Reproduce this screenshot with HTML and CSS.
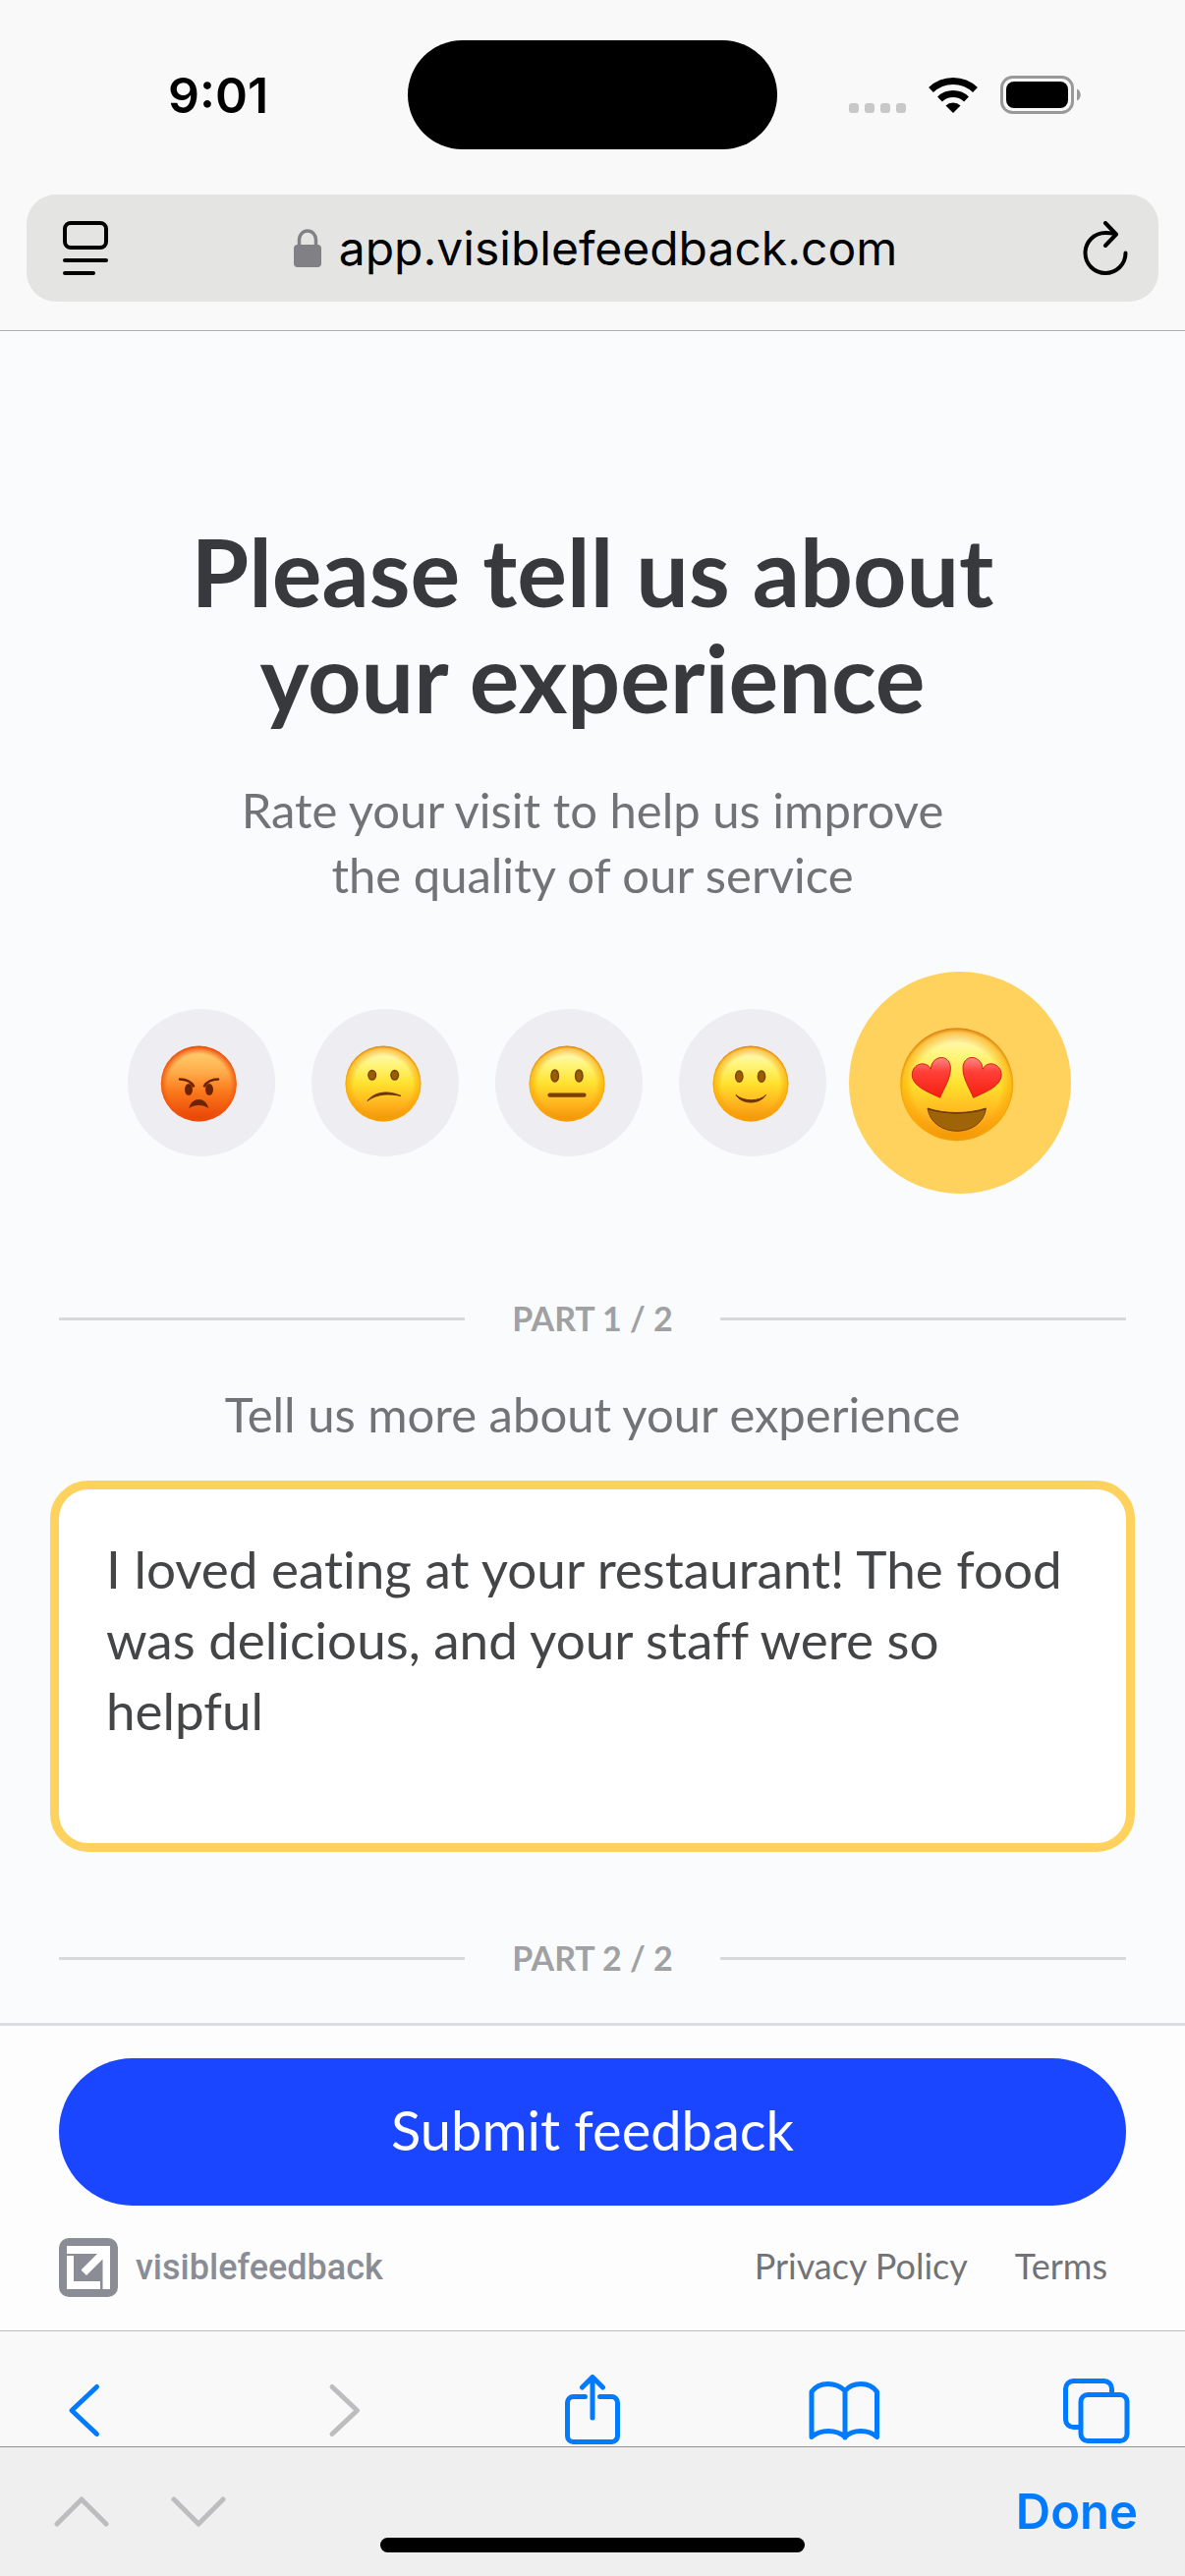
FILE: index.html
```html
<!DOCTYPE html>
<html lang="en">
<head>
  <meta charset="UTF-8">
  <meta name="viewport" content="width=device-width, initial-scale=1.0">
  <title>Visible Feedback</title>
  <link rel="stylesheet" href="styles.css">
</head>
<body>
  <header class="browser-top">
    <div class="status-bar">
      <span class="time">9:01</span>
      <div class="island"></div>
      <div class="status-icons">
        <svg width="58" height="40" viewBox="0 0 58 40" fill="#c8c8c8">
          <rect x="0" y="28" width="10" height="10" rx="3"/>
          <rect x="16" y="28" width="10" height="10" rx="3"/>
          <rect x="32" y="28" width="10" height="10" rx="3"/>
          <rect x="48" y="28" width="10" height="10" rx="3"/>
        </svg>
        <svg class="wifi" width="52" height="40" viewBox="0 0 52 40">
          <path d="M26 38l-7.5-7.5a11 11 0 0 1 15 0z"/>
          <path d="M12.5 24a19.5 19.5 0 0 1 27 0M3.500 14.500a32.500 32.500 0 0 1 45 0" fill="none" stroke="#000" stroke-width="7"/>
        </svg>
        <svg width="82" height="40" viewBox="0 0 82 40">
          <rect x="1.500" y="1.500" width="72" height="36" rx="11" fill="none" stroke="#999" stroke-width="3"/>
          <rect x="6" y="6" width="63" height="27" rx="8"/>
          <path d="M78 13.500c5 2 5 10 0 12z" fill="#999"/>
        </svg>
      </div>
    </div>
    <div class="address-bar">
      <button class="icon-btn" aria-label="Page menu">
        <svg width="46" height="56" viewBox="0 0 46 56" fill="none" stroke="#000" stroke-width="4" stroke-linecap="round">
          <rect x="2" y="2" width="42" height="25" rx="6"/>
          <path d="M2 40h42M2 53h29"/>
        </svg>
      </button>
      <div class="url">
        <svg width="28" height="40" viewBox="0 0 28 40" fill="#808085">
          <rect x="0" y="16" width="28" height="23" rx="4"/>
          <path d="M5.500 18v-7a8.500 9 0 0 1 17 0v7" fill="none" stroke="#808085" stroke-width="3.500"/>
        </svg>
        <span>app.visiblefeedback.com</span>
      </div>
      <button class="icon-btn" aria-label="Reload">
        <svg width="46" height="56" viewBox="0 0 46 56" fill="none" stroke="#000" stroke-width="4" stroke-linecap="round" stroke-linejoin="round">
          <path d="M43.500 32.500a20.500 20.500 0 1 1-20.500-20.500q5 0 10 1"/>
          <path d="M23 2l11 11.500-11 11.500"/>
        </svg>
      </button>
    </div>
  </header>

  <main class="feedback">
    <h1>Please tell us about<br>your experience</h1>
    <p class="lead">Rate your visit to help us improve<br>the quality of our service</p>

    <svg class="defs" width="0" height="0" aria-hidden="true">
      <defs>
        <linearGradient id="yellow" x1="0" y1="0" x2="0" y2="1">
          <stop offset="0" stop-color="#fffbd8"/>
          <stop offset=".25" stop-color="#fff57a"/>
          <stop offset=".5" stop-color="#ffe12e"/>
          <stop offset=".8" stop-color="#ffaf1c"/>
          <stop offset="1" stop-color="#f09408"/>
        </linearGradient>
        <linearGradient id="red" x1="0" y1="0" x2="0" y2="1">
          <stop offset="0" stop-color="#ffd878"/>
          <stop offset=".35" stop-color="#ffab4a"/>
          <stop offset=".6" stop-color="#fb7a1c"/>
          <stop offset="1" stop-color="#e84003"/>
        </linearGradient>
        <radialGradient id="edge" cx=".5" cy=".52" r=".52">
          <stop offset=".74" stop-color="#f09000" stop-opacity="0"/>
          <stop offset=".92" stop-color="#fba400" stop-opacity=".6"/>
          <stop offset="1" stop-color="#d87400"/>
        </radialGradient>
        <radialGradient id="redEdge" cx=".5" cy=".53" r=".52">
          <stop offset=".8" stop-color="#f25a10" stop-opacity="0"/>
          <stop offset="1" stop-color="#ec4c0c"/>
        </radialGradient>
        <linearGradient id="heart" x1="0" y1="0" x2="0" y2="1">
          <stop offset="0" stop-color="#ff8a86"/>
          <stop offset=".35" stop-color="#ff3f38"/>
          <stop offset="1" stop-color="#f4200f"/>
        </linearGradient>
      </defs>
    </svg>

    <div class="ratings" role="radiogroup" aria-label="Rating">
      <label class="rating">
        <input type="radio" name="rating" value="1" aria-label="Angry">
        <svg viewBox="0 0 150 150">
          <circle cx="72.300" cy="76" r="38.500" fill="url(#red)"/>
          <circle cx="72.300" cy="76" r="38.500" fill="url(#redEdge)"/>
          <g fill="#6e2302">
            <ellipse cx="62" cy="82" rx="4" ry="6"/>
            <ellipse cx="83" cy="82" rx="4" ry="6"/>
            <path d="M62.300 101c3-12 17-12 20 0-6-4-14-4-20 0z"/>
          </g>
          <path d="M53 71.500c6 0 11 2 14 7M92 71.500c-6 0-11 2-14 7" fill="none" stroke="#6e2302" stroke-width="2.600" stroke-linecap="round"/>
        </svg>
      </label>
      <label class="rating">
        <input type="radio" name="rating" value="2" aria-label="Unhappy">
        <svg viewBox="0 0 150 150">
          <circle cx="73" cy="76" r="38.500" fill="url(#yellow)"/>
          <circle cx="73" cy="76" r="38.500" fill="url(#edge)"/>
          <ellipse cx="61.700" cy="67.300" rx="3.800" ry="4.800" fill="#9a5c06" stroke="#7a4404" stroke-width="1.500"/>
          <ellipse cx="84.700" cy="67.300" rx="3.800" ry="4.800" fill="#9a5c06" stroke="#7a4404" stroke-width="1.500"/>
          <path d="M57 93.500c8-10 22-10.500 34-5-12-2.500-24-2.500-34 5z" fill="#6b3503" stroke="#6b3503" stroke-linejoin="round"/>
        </svg>
      </label>
      <label class="rating">
        <input type="radio" name="rating" value="3" aria-label="Neutral">
        <svg viewBox="0 0 150 150">
          <circle cx="73" cy="76" r="38.500" fill="url(#yellow)"/>
          <circle cx="73" cy="76" r="38.500" fill="url(#edge)"/>
          <ellipse cx="60.700" cy="68" rx="3.700" ry="6" fill="#9a5c06" stroke="#7a4404" stroke-width="1.500"/>
          <ellipse cx="85.300" cy="68" rx="3.700" ry="6" fill="#9a5c06" stroke="#7a4404" stroke-width="1.500"/>
          <path d="M55.500 87.700h35" stroke="#7a4004" stroke-width="4.200" stroke-linecap="round"/>
        </svg>
      </label>
      <label class="rating">
        <input type="radio" name="rating" value="4" aria-label="Happy">
        <svg viewBox="0 0 150 150">
          <circle cx="73" cy="76" r="38.500" fill="url(#yellow)"/>
          <circle cx="73" cy="76" r="38.500" fill="url(#edge)"/>
          <ellipse cx="61.300" cy="68.700" rx="3.600" ry="5.600" fill="#9a5c06" stroke="#7a4404" stroke-width="1.500"/>
          <ellipse cx="84" cy="68.700" rx="3.600" ry="5.600" fill="#9a5c06" stroke="#7a4404" stroke-width="1.500"/>
          <path d="M58 87.500c6 10 24 10 30.500 0-7 7-23 7-30.500 0z" fill="#6b3503" stroke="#6b3503" stroke-linejoin="round"/>
        </svg>
      </label>
      <label class="rating selected">
        <input type="radio" name="rating" value="5" aria-label="Love it" checked>
        <svg viewBox="0 0 226 226">
          <circle cx="109.700" cy="114.700" r="57.500" fill="url(#yellow)"/>
          <circle cx="109.700" cy="114.700" r="57.500" fill="url(#edge)"/>
          <path id="eye" d="M92.700 128.300C82 123 64.300 117 64.300 105C64.500 93 79 90 83.300 99.300C84 85 102 83 103.300 97C104 108 97 118 92.700 128.300z" fill="url(#heart)" stroke="#d4200c" stroke-width="1"/>
          <use href="#eye" transform="translate(219.400 0) scale(-1 1)"/>
          <path d="M80 139c18 6 41 6 59.500 0-4 31-55 31-59.500 0z" fill="#a06408" stroke="#7a4404" stroke-width="1" stroke-linejoin="round"/>
          <path d="M80 139c18 6 41 6 59.500 0l-.5 1.500c-18 5.500-41 5.500-58.500 0z" fill="#6b3503"/>
        </svg>
      </label>
    </div>

    <div class="part">PART 1 / 2</div>
    <label class="question" for="comment">Tell us more about your experience</label>
    <textarea id="comment" class="comment" spellcheck="false">I loved eating at your restaurant! The food was delicious, and your staff were so helpful</textarea>
    <div class="part">PART 2 / 2</div>
  </main>

  <footer class="submit-panel">
    <button class="submit-btn">Submit feedback</button>
    <div class="footer-row">
      <a class="brand" href="#">
        <svg width="60" height="60" viewBox="0 0 60 60">
          <rect width="60" height="60" rx="10" fill="#8a8d96"/>
          <path d="M8 8h44v44h-7.500V21.500L28 38l-5.500-5.500L39 16H8z" fill="#fff"/>
          <path d="M8 18h7v26h27v8H8z" fill="#fff"/>
        </svg>
        <span>visiblefeedback</span>
      </a>
      <nav class="legal">
        <a href="#">Privacy Policy</a>
        <a href="#">Terms</a>
      </nav>
    </div>
  </footer>

  <nav class="toolbar" aria-label="Browser">
    <button class="icon-btn" aria-label="Back">
      <svg width="72" height="72" viewBox="0 0 72 72"><path d="M48.500 12.500L23 36.500l25.500 24"/></svg>
    </button>
    <button class="icon-btn off" aria-label="Forward" disabled>
      <svg width="72" height="72" viewBox="0 0 72 72"><path d="M30 12.500l25.500 24-25.500 24"/></svg>
    </button>
    <button class="icon-btn" aria-label="Share">
      <svg width="72" height="72" viewBox="0 0 72 72"><path d="M30.500 22.500H18.500a6 6 0 0 0-6 6v34a6 6 0 0 0 6 6h39a6 6 0 0 0 6-6v-34a6 6 0 0 0-6-6H45.500M38 44V3M27.500 13L38 2.500 48.500 13"/></svg>
    </button>
    <button class="icon-btn" aria-label="Bookmarks">
      <svg width="72" height="72" viewBox="0 0 72 72"><path d="M3 17.500v46c9-8 25-8 34 0 8-8 24-8 32.500 0v-46c-8-11-25-10-32.500-1-9-9-26-10-34 1zM37 16.500V64"/></svg>
    </button>
    <button class="icon-btn" aria-label="Tabs">
      <svg width="72" height="72" viewBox="0 0 72 72"><path d="M19 53.500h-6.500a8 8 0 0 1-8-8v-31a8 8 0 0 1 8-8h31a8 8 0 0 1 8 8V20"/><rect x="20" y="20.500" width="47" height="47" rx="7"/></svg>
    </button>
  </nav>

  <div class="keyboard-bar">
    <div class="field-nav">
      <button class="icon-btn off" aria-label="Previous field" disabled>
        <svg width="56" height="36" viewBox="0 0 56 36"><path d="M3 31L28 6l25 25"/></svg>
      </button>
      <button class="icon-btn off" aria-label="Next field" disabled>
        <svg width="56" height="36" viewBox="0 0 56 36"><path d="M3 6l25 25L53 6"/></svg>
      </button>
    </div>
    <button class="done-btn">Done</button>
    <div class="home-indicator"></div>
  </div>
</body>
</html>
```

FILE: styles.css
```css
* { box-sizing: border-box; }
body { margin: 0; min-height: 100vh; display: flex; flex-direction: column; background: #fafbfd; color: #38393c; font-family: Lato, sans-serif; }
h1, p { margin: 0; font-weight: normal; }
button { border: none; background: none; padding: 0; font-family: inherit; cursor: pointer; }
a { color: inherit; text-decoration: none; }
svg { display: block; }

.browser-top { background: #f9f9f9; padding: 41px 27px 29px; border-bottom: 1px solid #aeaeb0; font-family: Inter, sans-serif; color: #000; }
.status-bar { display: grid; grid-template-columns: 1fr 376px 1fr; align-items: center; margin-bottom: 46px; }
.time { padding-left: 144px; font-size: 50px; font-weight: 600; }
.island { height: 111px; border-radius: 56px; background: #000; }
.status-icons { display: flex; justify-content: flex-end; gap: 22px; padding-right: 79px; }
.address-bar { display: flex; align-items: center; justify-content: space-between; height: 109px; padding: 0 31px 0 37px; border-radius: 30px; background: #e4e5e3; }
.url { display: flex; align-items: center; gap: 18px; font-size: 48px; }

.feedback { flex: 1; padding: 0 60px; }
.feedback h1 { margin-top: 190px; font-size: 95px; line-height: 108px; font-weight: bold; text-align: center; }
.lead { margin-top: 48px; font-size: 49px; line-height: 66px; color: #727376; text-align: center; }
.defs { position: absolute; }
.ratings { display: flex; align-items: center; justify-content: center; gap: 37px; margin-top: 66px; padding-left: 14px; }
.rating { width: 150px; height: 150px; border-radius: 50%; background: #eeedf1; cursor: pointer; }
.rating input { position: absolute; opacity: 0; }
.rating.selected { width: 226px; height: 226px; margin-left: -14px; background: #ffd25e; }
.part { display: flex; align-items: center; gap: 48px; margin-top: 107px; font-size: 34px; line-height: 40px; font-weight: bold; color: #a0a1a3; }
.part::before, .part::after { content: ""; flex: 1; height: 3px; background: #d7d9db; }
.question { display: block; margin-top: 44px; font-size: 49px; line-height: 66px; color: #727376; text-align: center; }
.comment { display: block; width: calc(100% + 18px); height: 378px; margin: 35px -9px 0; padding: 45px 48px; border: 9px solid #ffd25e; border-radius: 39px; outline: none; resize: none; background: #fff; color: #444547; font-family: inherit; font-size: 53px; line-height: 72px; font-variant-ligatures: none; }
.comment + .part { margin-top: 88px; }

.submit-panel { padding: 33px 60px 34px; border-top: 3px solid #dcdde2; background: #fdfdfd; }
.submit-btn { display: block; width: 100%; height: 150px; padding-bottom: 5px; border-radius: 75px; background: #1a46ff; color: #fff; font-size: 56px; }
.footer-row { display: flex; align-items: center; justify-content: space-between; margin-top: 33px; padding-right: 19px; }
.brand { display: flex; align-items: center; gap: 18px; font-family: Roboto, sans-serif; font-size: 36px; font-weight: 500; color: #8a8d96; }
.legal { display: flex; gap: 48px; padding-bottom: 4px; font-size: 36px; color: #727376; }

.toolbar { display: flex; justify-content: space-between; height: 118px; padding: 44px 54px 0 50px; border-top: 1px solid #bcbdbf; background: #f9f9f9; }
.toolbar svg, .keyboard-bar svg { fill: none; stroke: #007aff; stroke-width: 5; stroke-linecap: round; stroke-linejoin: round; }
.toolbar .icon-btn { height: 72px; }
.toolbar .off svg, .keyboard-bar .off svg { stroke: #bdbdbf; }
.keyboard-bar { position: relative; display: flex; justify-content: space-between; align-items: flex-start; height: 132px; padding: 35px 48px 0 55px; border-top: 1px solid #919193; background: #efefef; }
.field-nav { display: flex; gap: 63px; padding-top: 12px; }
.done-btn { font-family: Inter, sans-serif; font-size: 49px; line-height: 62px; font-weight: 600; color: #007aff; }
.home-indicator { position: absolute; left: 50%; bottom: 24px; width: 432px; height: 15px; margin-left: -216px; border-radius: 8px; background: #000; }
```
